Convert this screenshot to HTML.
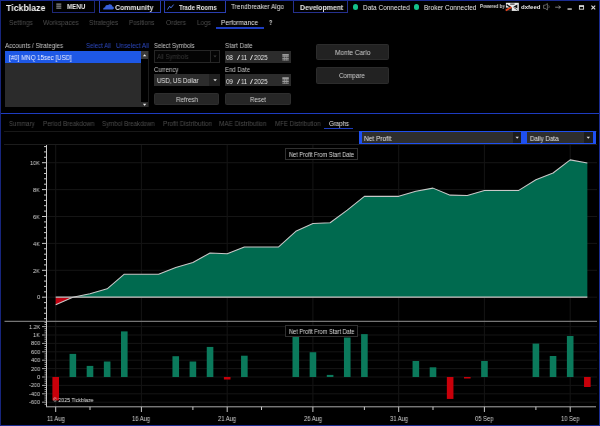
<!DOCTYPE html>
<html><head><meta charset="utf-8">
<style>
*{margin:0;padding:0;box-sizing:border-box}
html,body{width:600px;height:426px;overflow:hidden;background:#000}
body{position:relative;font-family:"Liberation Sans",sans-serif;color:#d8d8d8}
.t{position:absolute;white-space:nowrap;line-height:1;transform-origin:0 0;will-change:transform}
.b{font-weight:bold}
.x{position:absolute}
svg{position:absolute;left:0;top:0}
</style></head><body>
<!-- top bar boxes -->
<div class="x" style="left:52px;top:-1px;width:42.5px;height:14px;border:1px solid #1e2878"></div>
<div class="x" style="left:98.5px;top:-1px;width:62px;height:14px;border:1px solid #2a3eb0"></div>
<div class="x" style="left:164px;top:-1px;width:61.5px;height:13.5px;border:1px solid #2a3eb0"></div>
<div class="x" style="left:293px;top:-1px;width:54.5px;height:14px;border:1px solid #25308e"></div>
<div class="x" style="left:352.6px;top:4.3px;width:5.6px;height:5.6px;border-radius:50%;background:#14c08a"></div>
<div class="x" style="left:413.7px;top:4.3px;width:5.6px;height:5.6px;border-radius:50%;background:#14c08a"></div>
<div class="x" style="left:216px;top:27.1px;width:48px;height:1.6px;background:#1c3cc0"></div>

<!-- settings panel -->
<div class="x" style="left:5px;top:51px;width:136px;height:55.5px;background:#2b2b2b"></div>
<div class="x" style="left:5.2px;top:51px;width:135.8px;height:12.3px;background:#1e58e6"></div>
<div class="x" style="left:141px;top:51px;width:8px;height:55.5px;background:#000;border-right:1px solid #1c1c1c"></div>
<div class="x" style="left:141.3px;top:50.8px;width:7px;height:8px;background:#3a3a3a"></div>
<div class="x" style="left:141.3px;top:101.5px;width:7px;height:5px;background:#2c2c2c"></div>

<div class="x" style="left:154px;top:50.3px;width:66px;height:12.7px;border:1px solid #262626;background:#040404"></div>
<div class="x" style="left:209.5px;top:51px;width:1px;height:11px;background:#262626"></div>
<div class="x" style="left:154px;top:74px;width:66px;height:12px;background:#2c2c2c"></div>
<div class="x" style="left:209.3px;top:74px;width:10.7px;height:12px;background:#202020"></div>
<div class="x" style="left:153.8px;top:93px;width:65.7px;height:11.8px;background:#262626;border:1px solid #2e2e2e;border-radius:1.5px"></div>

<div class="x" style="left:225px;top:51px;width:65.7px;height:11.7px;background:#2c2c2c"></div>
<div class="x" style="left:225px;top:74.3px;width:65.7px;height:12px;background:#2c2c2c"></div>
<div class="x" style="left:225px;top:93px;width:66.2px;height:11.8px;background:#262626;border:1px solid #2e2e2e;border-radius:1.5px"></div>

<div class="x" style="left:316.4px;top:43.5px;width:72.2px;height:16.3px;background:#222;border:1px solid #2c2c2c;border-radius:1.5px"></div>
<div class="x" style="left:316.4px;top:66.9px;width:72.2px;height:16.7px;background:#222;border:1px solid #2c2c2c;border-radius:1.5px"></div>

<!-- blue separator -->
<div class="x" style="left:1px;top:112.6px;width:598px;height:1.6px;background:#1e3cc0"></div>

<!-- tabs -->
<div class="x" style="left:324px;top:127.8px;width:28.7px;height:1.5px;background:#1c3cc0"></div>
<div class="x" style="left:4px;top:130.5px;width:593px;height:1px;background:#181818"></div>

<!-- dropdowns -->
<div class="x" style="left:358.8px;top:130.8px;width:164.5px;height:13.5px;background:#2e2e2e;border:1.6px solid #1f50f0;border-left-width:3.2px;border-right-width:2px"></div>
<div class="x" style="left:513px;top:132.4px;width:8.3px;height:10.3px;background:#1c1c1c"></div>
<div class="x" style="left:523.3px;top:130.8px;width:73px;height:13.5px;background:#2e2e2e;border:1.6px solid #1f50f0;border-left-width:4.2px;border-right-width:3.5px"></div>
<div class="x" style="left:584px;top:132.4px;width:8.8px;height:10.3px;background:#1c1c1c"></div>

<!-- chart -->
<svg width="600" height="426">
<line x1="47" y1="297.2" x2="597" y2="297.2" stroke="#151515" stroke-width="1"/>
<line x1="47" y1="270.3" x2="597" y2="270.3" stroke="#151515" stroke-width="1"/>
<line x1="47" y1="243.4" x2="597" y2="243.4" stroke="#151515" stroke-width="1"/>
<line x1="47" y1="216.5" x2="597" y2="216.5" stroke="#151515" stroke-width="1"/>
<line x1="47" y1="189.6" x2="597" y2="189.6" stroke="#151515" stroke-width="1"/>
<line x1="47" y1="162.7" x2="597" y2="162.7" stroke="#151515" stroke-width="1"/>
<line x1="4" y1="144.5" x2="597" y2="144.5" stroke="#1c1c1c" stroke-width="1"/>
<line x1="55.7" y1="145" x2="55.7" y2="406" stroke="#151515" stroke-width="1"/>
<line x1="141.4" y1="145" x2="141.4" y2="406" stroke="#151515" stroke-width="1"/>
<line x1="227.2" y1="145" x2="227.2" y2="406" stroke="#151515" stroke-width="1"/>
<line x1="312.9" y1="145" x2="312.9" y2="406" stroke="#151515" stroke-width="1"/>
<line x1="398.7" y1="145" x2="398.7" y2="406" stroke="#151515" stroke-width="1"/>
<line x1="484.4" y1="145" x2="484.4" y2="406" stroke="#151515" stroke-width="1"/>
<line x1="570.2" y1="145" x2="570.2" y2="406" stroke="#151515" stroke-width="1"/>
<line x1="47" y1="402.2" x2="597" y2="402.2" stroke="#151515" stroke-width="1"/>
<line x1="47" y1="393.8" x2="597" y2="393.8" stroke="#151515" stroke-width="1"/>
<line x1="47" y1="385.4" x2="597" y2="385.4" stroke="#151515" stroke-width="1"/>
<line x1="47" y1="377.0" x2="597" y2="377.0" stroke="#151515" stroke-width="1"/>
<line x1="47" y1="368.6" x2="597" y2="368.6" stroke="#151515" stroke-width="1"/>
<line x1="47" y1="360.2" x2="597" y2="360.2" stroke="#151515" stroke-width="1"/>
<line x1="47" y1="351.8" x2="597" y2="351.8" stroke="#151515" stroke-width="1"/>
<line x1="47" y1="343.4" x2="597" y2="343.4" stroke="#151515" stroke-width="1"/>
<line x1="47" y1="335.0" x2="597" y2="335.0" stroke="#151515" stroke-width="1"/>
<line x1="47" y1="326.6" x2="597" y2="326.6" stroke="#151515" stroke-width="1"/>
<defs><clipPath id="cpos"><rect x="0" y="0" width="600" height="297.20"/></clipPath><clipPath id="cneg"><rect x="0" y="297.20" width="600" height="100"/></clipPath></defs>
<path d="M55.70,297.2 L55.70,304.69 L72.85,297.29 L90.00,293.74 L107.15,288.78 L124.30,274.17 L141.45,274.17 L158.60,274.17 L175.75,267.52 L192.90,262.55 L210.05,252.92 L227.20,253.73 L244.35,246.91 L261.50,246.91 L278.65,246.91 L295.80,231.34 L312.95,223.40 L330.10,222.73 L347.25,210.08 L364.40,196.35 L381.55,196.35 L398.70,196.35 L415.85,191.23 L433.00,188.12 L450.15,195.14 L467.30,195.54 L484.45,190.42 L501.60,190.42 L518.75,190.42 L535.90,179.73 L553.05,173.00 L570.20,159.88 L587.35,163.08 L587.35,297.2 Z" fill="#006a4f" clip-path="url(#cpos)"/>
<path d="M55.70,297.2 L55.70,304.69 L72.85,297.29 L90.00,293.74 L107.15,288.78 L124.30,274.17 L141.45,274.17 L158.60,274.17 L175.75,267.52 L192.90,262.55 L210.05,252.92 L227.20,253.73 L244.35,246.91 L261.50,246.91 L278.65,246.91 L295.80,231.34 L312.95,223.40 L330.10,222.73 L347.25,210.08 L364.40,196.35 L381.55,196.35 L398.70,196.35 L415.85,191.23 L433.00,188.12 L450.15,195.14 L467.30,195.54 L484.45,190.42 L501.60,190.42 L518.75,190.42 L535.90,179.73 L553.05,173.00 L570.20,159.88 L587.35,163.08 L587.35,297.2 Z" fill="#c00010" clip-path="url(#cneg)"/>
<polyline points="55.70,304.69 72.85,297.29 90.00,293.74 107.15,288.78 124.30,274.17 141.45,274.17 158.60,274.17 175.75,267.52 192.90,262.55 210.05,252.92 227.20,253.73 244.35,246.91 261.50,246.91 278.65,246.91 295.80,231.34 312.95,223.40 330.10,222.73 347.25,210.08 364.40,196.35 381.55,196.35 398.70,196.35 415.85,191.23 433.00,188.12 450.15,195.14 467.30,195.54 484.45,190.42 501.60,190.42 518.75,190.42 535.90,179.73 553.05,173.00 570.20,159.88 587.35,163.08" fill="none" stroke="#c8c8c8" stroke-width="1.05" stroke-linejoin="round"/>
<line x1="55.70" y1="297.2" x2="587.35" y2="297.2" stroke="#c8c8c8" stroke-width="1.2"/>
<rect x="52.40" y="377.00" width="6.6" height="23.39" fill="#c8000a"/>
<rect x="69.55" y="353.90" width="6.6" height="23.10" fill="#0b7a5c"/>
<rect x="86.70" y="365.91" width="6.6" height="11.09" fill="#0b7a5c"/>
<rect x="103.85" y="361.50" width="6.6" height="15.50" fill="#0b7a5c"/>
<rect x="121.00" y="331.39" width="6.6" height="45.61" fill="#0b7a5c"/>
<rect x="172.45" y="356.21" width="6.6" height="20.79" fill="#0b7a5c"/>
<rect x="189.60" y="361.50" width="6.6" height="15.50" fill="#0b7a5c"/>
<rect x="206.75" y="346.93" width="6.6" height="30.07" fill="#0b7a5c"/>
<rect x="223.90" y="377.00" width="6.6" height="2.52" fill="#c8000a"/>
<rect x="241.05" y="355.71" width="6.6" height="21.29" fill="#0b7a5c"/>
<rect x="292.50" y="328.36" width="6.6" height="48.64" fill="#0b7a5c"/>
<rect x="309.65" y="352.22" width="6.6" height="24.78" fill="#0b7a5c"/>
<rect x="326.80" y="374.90" width="6.6" height="2.10" fill="#0b7a5c"/>
<rect x="343.95" y="337.52" width="6.6" height="39.48" fill="#0b7a5c"/>
<rect x="361.10" y="334.12" width="6.6" height="42.88" fill="#0b7a5c"/>
<rect x="412.55" y="361.00" width="6.6" height="16.00" fill="#0b7a5c"/>
<rect x="429.70" y="367.30" width="6.6" height="9.70" fill="#0b7a5c"/>
<rect x="446.85" y="377.00" width="6.6" height="21.92" fill="#c8000a"/>
<rect x="464.00" y="377.00" width="6.6" height="1.50" fill="#c8000a"/>
<rect x="481.15" y="361.00" width="6.6" height="16.00" fill="#0b7a5c"/>
<rect x="532.60" y="343.61" width="6.6" height="33.39" fill="#0b7a5c"/>
<rect x="549.75" y="356.00" width="6.6" height="21.00" fill="#0b7a5c"/>
<rect x="566.90" y="336.01" width="6.6" height="40.99" fill="#0b7a5c"/>
<rect x="584.05" y="377.00" width="6.6" height="10.00" fill="#c8000a"/>
<line x1="4.5" y1="321.4" x2="597" y2="321.4" stroke="#757575" stroke-width="1.1"/>
<line x1="46.5" y1="145" x2="46.5" y2="407" stroke="#c8c8c8" stroke-width="1"/>
<line x1="46" y1="406.8" x2="596" y2="406.8" stroke="#aaaaaa" stroke-width="1"/>
<line x1="44" y1="318.7" x2="46.5" y2="318.7" stroke="#c8c8c8" stroke-width="1"/>
<line x1="44" y1="313.3" x2="46.5" y2="313.3" stroke="#c8c8c8" stroke-width="1"/>
<line x1="44" y1="308.0" x2="46.5" y2="308.0" stroke="#c8c8c8" stroke-width="1"/>
<line x1="44" y1="302.6" x2="46.5" y2="302.6" stroke="#c8c8c8" stroke-width="1"/>
<line x1="42" y1="297.2" x2="46.5" y2="297.2" stroke="#c8c8c8" stroke-width="1"/>
<line x1="44" y1="291.8" x2="46.5" y2="291.8" stroke="#c8c8c8" stroke-width="1"/>
<line x1="44" y1="286.4" x2="46.5" y2="286.4" stroke="#c8c8c8" stroke-width="1"/>
<line x1="44" y1="281.1" x2="46.5" y2="281.1" stroke="#c8c8c8" stroke-width="1"/>
<line x1="44" y1="275.7" x2="46.5" y2="275.7" stroke="#c8c8c8" stroke-width="1"/>
<line x1="42" y1="270.3" x2="46.5" y2="270.3" stroke="#c8c8c8" stroke-width="1"/>
<line x1="44" y1="264.9" x2="46.5" y2="264.9" stroke="#c8c8c8" stroke-width="1"/>
<line x1="44" y1="259.5" x2="46.5" y2="259.5" stroke="#c8c8c8" stroke-width="1"/>
<line x1="44" y1="254.2" x2="46.5" y2="254.2" stroke="#c8c8c8" stroke-width="1"/>
<line x1="44" y1="248.8" x2="46.5" y2="248.8" stroke="#c8c8c8" stroke-width="1"/>
<line x1="42" y1="243.4" x2="46.5" y2="243.4" stroke="#c8c8c8" stroke-width="1"/>
<line x1="44" y1="238.0" x2="46.5" y2="238.0" stroke="#c8c8c8" stroke-width="1"/>
<line x1="44" y1="232.6" x2="46.5" y2="232.6" stroke="#c8c8c8" stroke-width="1"/>
<line x1="44" y1="227.3" x2="46.5" y2="227.3" stroke="#c8c8c8" stroke-width="1"/>
<line x1="44" y1="221.9" x2="46.5" y2="221.9" stroke="#c8c8c8" stroke-width="1"/>
<line x1="42" y1="216.5" x2="46.5" y2="216.5" stroke="#c8c8c8" stroke-width="1"/>
<line x1="44" y1="211.1" x2="46.5" y2="211.1" stroke="#c8c8c8" stroke-width="1"/>
<line x1="44" y1="205.7" x2="46.5" y2="205.7" stroke="#c8c8c8" stroke-width="1"/>
<line x1="44" y1="200.4" x2="46.5" y2="200.4" stroke="#c8c8c8" stroke-width="1"/>
<line x1="44" y1="195.0" x2="46.5" y2="195.0" stroke="#c8c8c8" stroke-width="1"/>
<line x1="42" y1="189.6" x2="46.5" y2="189.6" stroke="#c8c8c8" stroke-width="1"/>
<line x1="44" y1="184.2" x2="46.5" y2="184.2" stroke="#c8c8c8" stroke-width="1"/>
<line x1="44" y1="178.8" x2="46.5" y2="178.8" stroke="#c8c8c8" stroke-width="1"/>
<line x1="44" y1="173.5" x2="46.5" y2="173.5" stroke="#c8c8c8" stroke-width="1"/>
<line x1="44" y1="168.1" x2="46.5" y2="168.1" stroke="#c8c8c8" stroke-width="1"/>
<line x1="42" y1="162.7" x2="46.5" y2="162.7" stroke="#c8c8c8" stroke-width="1"/>
<line x1="44" y1="157.3" x2="46.5" y2="157.3" stroke="#c8c8c8" stroke-width="1"/>
<line x1="44" y1="151.9" x2="46.5" y2="151.9" stroke="#c8c8c8" stroke-width="1"/>
<line x1="44" y1="146.6" x2="46.5" y2="146.6" stroke="#c8c8c8" stroke-width="1"/>
<line x1="44.5" y1="404.3" x2="46.5" y2="404.3" stroke="#c8c8c8" stroke-width="0.8"/>
<line x1="42" y1="402.2" x2="46.5" y2="402.2" stroke="#c8c8c8" stroke-width="0.8"/>
<line x1="44.5" y1="400.1" x2="46.5" y2="400.1" stroke="#c8c8c8" stroke-width="0.8"/>
<line x1="44.5" y1="398.0" x2="46.5" y2="398.0" stroke="#c8c8c8" stroke-width="0.8"/>
<line x1="44.5" y1="395.9" x2="46.5" y2="395.9" stroke="#c8c8c8" stroke-width="0.8"/>
<line x1="42" y1="393.8" x2="46.5" y2="393.8" stroke="#c8c8c8" stroke-width="0.8"/>
<line x1="44.5" y1="391.7" x2="46.5" y2="391.7" stroke="#c8c8c8" stroke-width="0.8"/>
<line x1="44.5" y1="389.6" x2="46.5" y2="389.6" stroke="#c8c8c8" stroke-width="0.8"/>
<line x1="44.5" y1="387.5" x2="46.5" y2="387.5" stroke="#c8c8c8" stroke-width="0.8"/>
<line x1="42" y1="385.4" x2="46.5" y2="385.4" stroke="#c8c8c8" stroke-width="0.8"/>
<line x1="44.5" y1="383.3" x2="46.5" y2="383.3" stroke="#c8c8c8" stroke-width="0.8"/>
<line x1="44.5" y1="381.2" x2="46.5" y2="381.2" stroke="#c8c8c8" stroke-width="0.8"/>
<line x1="44.5" y1="379.1" x2="46.5" y2="379.1" stroke="#c8c8c8" stroke-width="0.8"/>
<line x1="42" y1="377.0" x2="46.5" y2="377.0" stroke="#c8c8c8" stroke-width="0.8"/>
<line x1="44.5" y1="374.9" x2="46.5" y2="374.9" stroke="#c8c8c8" stroke-width="0.8"/>
<line x1="44.5" y1="372.8" x2="46.5" y2="372.8" stroke="#c8c8c8" stroke-width="0.8"/>
<line x1="44.5" y1="370.7" x2="46.5" y2="370.7" stroke="#c8c8c8" stroke-width="0.8"/>
<line x1="42" y1="368.6" x2="46.5" y2="368.6" stroke="#c8c8c8" stroke-width="0.8"/>
<line x1="44.5" y1="366.5" x2="46.5" y2="366.5" stroke="#c8c8c8" stroke-width="0.8"/>
<line x1="44.5" y1="364.4" x2="46.5" y2="364.4" stroke="#c8c8c8" stroke-width="0.8"/>
<line x1="44.5" y1="362.3" x2="46.5" y2="362.3" stroke="#c8c8c8" stroke-width="0.8"/>
<line x1="42" y1="360.2" x2="46.5" y2="360.2" stroke="#c8c8c8" stroke-width="0.8"/>
<line x1="44.5" y1="358.1" x2="46.5" y2="358.1" stroke="#c8c8c8" stroke-width="0.8"/>
<line x1="44.5" y1="356.0" x2="46.5" y2="356.0" stroke="#c8c8c8" stroke-width="0.8"/>
<line x1="44.5" y1="353.9" x2="46.5" y2="353.9" stroke="#c8c8c8" stroke-width="0.8"/>
<line x1="42" y1="351.8" x2="46.5" y2="351.8" stroke="#c8c8c8" stroke-width="0.8"/>
<line x1="44.5" y1="349.7" x2="46.5" y2="349.7" stroke="#c8c8c8" stroke-width="0.8"/>
<line x1="44.5" y1="347.6" x2="46.5" y2="347.6" stroke="#c8c8c8" stroke-width="0.8"/>
<line x1="44.5" y1="345.5" x2="46.5" y2="345.5" stroke="#c8c8c8" stroke-width="0.8"/>
<line x1="42" y1="343.4" x2="46.5" y2="343.4" stroke="#c8c8c8" stroke-width="0.8"/>
<line x1="44.5" y1="341.3" x2="46.5" y2="341.3" stroke="#c8c8c8" stroke-width="0.8"/>
<line x1="44.5" y1="339.2" x2="46.5" y2="339.2" stroke="#c8c8c8" stroke-width="0.8"/>
<line x1="44.5" y1="337.1" x2="46.5" y2="337.1" stroke="#c8c8c8" stroke-width="0.8"/>
<line x1="42" y1="335.0" x2="46.5" y2="335.0" stroke="#c8c8c8" stroke-width="0.8"/>
<line x1="44.5" y1="332.9" x2="46.5" y2="332.9" stroke="#c8c8c8" stroke-width="0.8"/>
<line x1="44.5" y1="330.8" x2="46.5" y2="330.8" stroke="#c8c8c8" stroke-width="0.8"/>
<line x1="44.5" y1="328.7" x2="46.5" y2="328.7" stroke="#c8c8c8" stroke-width="0.8"/>
<line x1="42" y1="326.6" x2="46.5" y2="326.6" stroke="#c8c8c8" stroke-width="0.8"/>
<line x1="44.5" y1="324.5" x2="46.5" y2="324.5" stroke="#c8c8c8" stroke-width="0.8"/>
<line x1="44.5" y1="322.4" x2="46.5" y2="322.4" stroke="#c8c8c8" stroke-width="0.8"/>
<line x1="55.7" y1="406.8" x2="55.7" y2="412" stroke="#c8c8c8" stroke-width="1"/>
<line x1="141.4" y1="406.8" x2="141.4" y2="412" stroke="#c8c8c8" stroke-width="1"/>
<line x1="227.2" y1="406.8" x2="227.2" y2="412" stroke="#c8c8c8" stroke-width="1"/>
<line x1="312.9" y1="406.8" x2="312.9" y2="412" stroke="#c8c8c8" stroke-width="1"/>
<line x1="398.7" y1="406.8" x2="398.7" y2="412" stroke="#c8c8c8" stroke-width="1"/>
<line x1="484.4" y1="406.8" x2="484.4" y2="412" stroke="#c8c8c8" stroke-width="1"/>
<line x1="570.2" y1="406.8" x2="570.2" y2="412" stroke="#c8c8c8" stroke-width="1"/>
<line x1="90.0" y1="406.8" x2="90.0" y2="410" stroke="#c8c8c8" stroke-width="1"/>
<line x1="192.9" y1="406.8" x2="192.9" y2="410" stroke="#c8c8c8" stroke-width="1"/>
<line x1="261.5" y1="406.8" x2="261.5" y2="410" stroke="#c8c8c8" stroke-width="1"/>
<line x1="364.4" y1="406.8" x2="364.4" y2="410" stroke="#c8c8c8" stroke-width="1"/>
<line x1="433.0" y1="406.8" x2="433.0" y2="410" stroke="#c8c8c8" stroke-width="1"/>
<line x1="535.9" y1="406.8" x2="535.9" y2="410" stroke="#c8c8c8" stroke-width="1"/>
</svg>
<div class="x" style="left:285.2px;top:147.5px;width:72.5px;height:12.7px;border:1px solid #303030;background:#000"></div>
<div class="x" style="left:285.2px;top:325.2px;width:72.5px;height:12px;border:1px solid #303030;background:#000"></div>

<!-- icons overlay -->
<svg width="600" height="150">
<g fill="#b0b0b0"><rect x="56.3" y="3.6" width="5" height="1"/><rect x="56.3" y="5.6" width="5" height="1"/><rect x="56.3" y="7.6" width="5" height="1"/></g>
<path d="M103.3,9.4 L112.6,9.4 C114.4,9.4 114.3,6.4 112.4,6.5 C112.1,4.2 109.1,3.6 108,5.2 C106.5,4.5 104.9,5.7 105.3,7.2 C103.4,7.3 102.8,9.2 103.3,9.4 Z" fill="#3860d8"/>
<path d="M167.5,9.6 L169.6,6.2 L170.9,7.9 L173.6,4.6" fill="none" stroke="#4a72e0" stroke-width="1"/>
<rect x="505.9" y="2.8" width="12.9" height="8.1" fill="#eaeaea"/>
<path d="M505.9,7.6 L511.8,7.6 L511.8,10.9 L505.9,10.9 Z" fill="#111"/>
<path d="M506.6,4.6 L510.6,7.4" stroke="#111" stroke-width="1.3"/>
<path d="M510.2,3.6 L514.6,3.6 L514.6,4.6 L510.2,4.6 Z" fill="#222"/>
<path d="M513.6,6.6 L517.4,4.6 L517.4,8.6 Z" fill="#111"/>
<path d="M513.4,7.2 L517.6,10.2" stroke="#333" stroke-width="0.8"/>
<path d="M505.8,10.4 L511.4,7.2" stroke="#e8401a" stroke-width="1.7"/>
<path d="M543.6,5.2 L545.2,5.2 L547.4,3.6 L547.4,10 L545.2,8.4 L543.6,8.4 Z" fill="none" stroke="#8c8c8c" stroke-width="0.7"/>
<path d="M548.7,5.4 Q549.7,6.8 548.7,8.2" fill="none" stroke="#8c8c8c" stroke-width="0.6"/>
<path d="M555.2,7.2 L560.5,7.2 M558.6,5.7 L560.6,7.2 L558.6,8.7" stroke="#9a9a9a" stroke-width="0.8" fill="none"/>
<rect x="567.5" y="8.4" width="4.3" height="1.3" fill="#dcdcdc"/>
<rect x="579.4" y="5.9" width="4.2" height="3.3" fill="none" stroke="#dcdcdc" stroke-width="0.9"/>
<rect x="579" y="5.4" width="5" height="1.5" fill="#dcdcdc"/>
<path d="M591.4,5.6 L595.2,9.4 M595.2,5.6 L591.4,9.4" stroke="#dcdcdc" stroke-width="1.1"/>
<path d="M142.9,56.2 L144.6,54.2 L146.3,56.2 Z" fill="#f0f0f0"/>
<path d="M142.9,103.8 L146.3,103.8 L144.6,105.8 Z" fill="#f0f0f0"/>
<path d="M213.4,55.6 L216.6,55.6 L215,57.4 Z" fill="#3a3a3a"/>
<path d="M213.3,79.2 L216.9,79.2 L215.1,81.2 Z" fill="#e0e0e0"/>
<g fill="#a8a8a8">
<rect x="282.3" y="54.1" width="6.5" height="1.6"/><rect x="282.3" y="56.3" width="6.5" height="0.9"/><rect x="282.3" y="57.9" width="6.5" height="0.9"/><rect x="282.3" y="59.5" width="6.5" height="0.9"/>
<rect x="282.3" y="77.3" width="6.5" height="1.6"/><rect x="282.3" y="79.5" width="6.5" height="0.9"/><rect x="282.3" y="81.1" width="6.5" height="0.9"/><rect x="282.3" y="82.7" width="6.5" height="0.9"/>
</g>
<g fill="#9a9a9a"><rect x="284" y="55.7" width="0.6" height="4.7"/><rect x="286.5" y="55.7" width="0.6" height="4.7"/><rect x="284" y="78.9" width="0.6" height="4.7"/><rect x="286.5" y="78.9" width="0.6" height="4.7"/></g>
<path d="M515.5,136.8 L518.9,136.8 L517.2,138.8 Z" fill="#e0e0e0"/>
<path d="M586.6,136.8 L590,136.8 L588.3,138.8 Z" fill="#e0e0e0"/>
</svg>
<!-- window border -->
<div class="x" style="left:0;top:0;width:600px;height:426px;border:1px solid #1b2c90;border-left-color:#17257c"></div>
<div class="t b" id="t0" style="left:6.41px;top:2.83px;font-size:9.66px;color:#f2f2f2;transform:scaleX(0.910)">Tickblaze</div>
<div class="t b" id="t1" style="left:67.08px;top:2.59px;font-size:7.27px;color:#e6e6e6;transform:scaleX(0.854)">MENU</div>
<div class="t b" id="t2" style="left:115.37px;top:4.13px;font-size:7.59px;color:#e6e6e6;transform:scaleX(0.918)">Community</div>
<div class="t b" id="t3" style="left:179.19px;top:4.86px;font-size:6.48px;color:#e6e6e6;transform:scaleX(0.917)">Trade Rooms</div>
<div class="t" id="t4" style="left:231.35px;top:4.03px;font-size:7.17px;color:#e6e6e6;transform:scaleX(0.904)">Trendbreaker Algo</div>
<div class="t b" id="t5" style="left:299.96px;top:4.63px;font-size:7.17px;color:#e6e6e6;transform:scaleX(0.960)">Development</div>
<div class="t" id="t6" style="left:362.82px;top:4.86px;font-size:6.48px;color:#e6e6e6;transform:scaleX(0.991)">Data Connected</div>
<div class="t" id="t7" style="left:423.56px;top:4.86px;font-size:6.48px;color:#e6e6e6;transform:scaleX(1.006)">Broker Connected</div>
<div class="t b" id="t8" style="left:480.12px;top:5.01px;font-size:4.83px;color:#d8d8d8;transform:scaleX(0.909)">Powered by</div>
<div class="t b" id="t9" style="left:520.86px;top:3.96px;font-size:6.07px;color:#e6e6e6;transform:scaleX(0.988)">dxfeed</div>
<div class="t" id="t10" style="left:8.70px;top:20.33px;font-size:6.76px;color:#4c4c4c;transform:scaleX(0.976)">Settings</div>
<div class="t" id="t11" style="left:42.97px;top:20.33px;font-size:6.76px;color:#4c4c4c;transform:scaleX(0.960)">Workspaces</div>
<div class="t" id="t12" style="left:88.71px;top:20.33px;font-size:6.76px;color:#4c4c4c;transform:scaleX(0.960)">Strategies</div>
<div class="t" id="t13" style="left:129.08px;top:20.33px;font-size:6.76px;color:#4c4c4c;transform:scaleX(0.928)">Positions</div>
<div class="t" id="t14" style="left:165.69px;top:20.33px;font-size:6.76px;color:#4c4c4c;transform:scaleX(0.966)">Orders</div>
<div class="t" id="t15" style="left:196.83px;top:20.02px;font-size:7.13px;color:#4c4c4c;transform:scaleX(0.890)">Logs</div>
<div class="t" id="t16" style="left:221.17px;top:19.89px;font-size:6.71px;color:#e6e6e6;transform:scaleX(0.963)">Performance</div>
<div class="t b" id="t17" style="left:268.75px;top:19.69px;font-size:6.95px;color:#e6e6e6;transform:scaleX(0.793)">?</div>
<div class="t" id="t18" style="left:5.08px;top:42.53px;font-size:6.76px;color:#c4c4c4;transform:scaleX(0.909)">Accounts / Strategies</div>
<div class="t" id="t19" style="left:86.43px;top:42.53px;font-size:6.76px;color:#2c48c0;transform:scaleX(0.895)">Select All</div>
<div class="t" id="t20" style="left:116.21px;top:42.53px;font-size:6.76px;color:#2c48c0;transform:scaleX(0.932)">Unselect All</div>
<div class="t" id="t21" style="left:154.44px;top:42.53px;font-size:6.76px;color:#c4c4c4;transform:scaleX(0.869)">Select Symbols</div>
<div class="t" id="t22" style="left:225.02px;top:42.82px;font-size:6.59px;color:#c4c4c4;transform:scaleX(0.931)">Start Date</div>
<div class="t" id="t23" style="left:9.22px;top:54.53px;font-size:6.76px;color:#f0f0ff;transform:scaleX(0.915)">[#0] MNQ 15sec [USD]</div>
<div class="t" id="t24" style="left:157.23px;top:53.58px;font-size:6.76px;color:#383838;transform:scaleX(0.893)">All Symbols</div>
<div class="t" id="t25" style="left:226.32px;top:53.95px;font-size:7.03px;color:#e6e6e6;transform:scaleX(0.857)">08</div>
<div class="t" id="t26" style="left:236.80px;top:55.13px;font-size:6.76px;color:#e6e6e6;transform:scaleX(1.600)">/</div>
<div class="t" id="t27" style="left:241.07px;top:54.82px;font-size:7.13px;color:#e6e6e6;transform:scaleX(0.805)">11</div>
<div class="t" id="t28" style="left:249.70px;top:55.13px;font-size:6.76px;color:#e6e6e6;transform:scaleX(1.546)">/</div>
<div class="t" id="t29" style="left:254.25px;top:53.95px;font-size:7.03px;color:#e6e6e6;transform:scaleX(0.874)">2025</div>
<div class="t" id="t30" style="left:154.00px;top:66.99px;font-size:6.45px;color:#c4c4c4;transform:scaleX(0.929)">Currency</div>
<div class="t" id="t31" style="left:224.80px;top:66.70px;font-size:6.62px;color:#c4c4c4;transform:scaleX(0.908)">End Date</div>
<div class="t" id="t32" style="left:156.84px;top:77.50px;font-size:6.62px;color:#e6e6e6;transform:scaleX(0.904)">USD, US Dollar</div>
<div class="t" id="t33" style="left:226.32px;top:77.65px;font-size:7.03px;color:#e6e6e6;transform:scaleX(0.859)">09</div>
<div class="t" id="t34" style="left:236.80px;top:78.53px;font-size:6.76px;color:#e6e6e6;transform:scaleX(1.600)">/</div>
<div class="t" id="t35" style="left:241.07px;top:78.87px;font-size:7.13px;color:#e6e6e6;transform:scaleX(0.805)">11</div>
<div class="t" id="t36" style="left:249.70px;top:78.53px;font-size:6.76px;color:#e6e6e6;transform:scaleX(1.546)">/</div>
<div class="t" id="t37" style="left:254.25px;top:77.65px;font-size:7.03px;color:#e6e6e6;transform:scaleX(0.874)">2025</div>
<div class="t" id="t38" style="left:175.73px;top:96.66px;font-size:6.90px;color:#d0d0d0;transform:scaleX(0.918)">Refresh</div>
<div class="t" id="t39" style="left:250.02px;top:95.59px;font-size:7.27px;color:#d0d0d0;transform:scaleX(0.845)">Reset</div>
<div class="t" id="t40" style="left:334.72px;top:49.96px;font-size:6.90px;color:#d0d0d0;transform:scaleX(0.945)">Monte Carlo</div>
<div class="t" id="t41" style="left:339.39px;top:72.25px;font-size:7.03px;color:#d0d0d0;transform:scaleX(0.896)">Compare</div>
<div class="t" id="t42" style="left:9.13px;top:121.47px;font-size:6.88px;color:#4c4c4c;transform:scaleX(0.869)">Summary</div>
<div class="t" id="t43" style="left:43.28px;top:120.50px;font-size:6.62px;color:#4c4c4c;transform:scaleX(0.952)">Period Breakdown</div>
<div class="t" id="t44" style="left:102.22px;top:120.50px;font-size:6.62px;color:#4c4c4c;transform:scaleX(0.923)">Symbol Breakdown</div>
<div class="t" id="t45" style="left:162.72px;top:120.50px;font-size:6.62px;color:#4c4c4c;transform:scaleX(0.971)">Profit Distribution</div>
<div class="t" id="t46" style="left:219.37px;top:120.50px;font-size:6.62px;color:#4c4c4c;transform:scaleX(0.964)">MAE Distribution</div>
<div class="t" id="t47" style="left:274.79px;top:120.50px;font-size:6.62px;color:#4c4c4c;transform:scaleX(0.930)">MFE Distribution</div>
<div class="t" id="t48" style="left:328.89px;top:120.50px;font-size:6.62px;color:#e6e6e6;transform:scaleX(0.922)">Graphs</div>
<div class="t" id="t49" style="left:364.46px;top:135.96px;font-size:6.90px;color:#e6e6e6;transform:scaleX(0.949)">Net Profit</div>
<div class="t" id="t50" style="left:530.29px;top:135.96px;font-size:6.90px;color:#e6e6e6;transform:scaleX(0.893)">Daily Data</div>
<div class="t" id="t51" style="left:288.83px;top:151.58px;font-size:6.70px;color:#dcdcdc;transform:scaleX(0.842)">Net Profit From Start Date</div>
<div class="t" id="t52" style="left:288.83px;top:329.18px;font-size:6.70px;color:#dcdcdc;transform:scaleX(0.847)">Net Profit From Start Date</div>
<div class="t" id="t53" style="left:53.22px;top:397.33px;font-size:6.22px;color:#e0e0e0;transform:scaleX(0.849)">© 2025 Tickblaze</div>
<div class="t" id="t54" style="left:36.94px;top:294.00px;font-size:6.02px;color:#d4d4d4;transform:scaleX(0.919)">0</div>
<div class="t" id="t55" style="left:33.10px;top:267.60px;font-size:6.02px;color:#d4d4d4;transform:scaleX(0.919)">2K</div>
<div class="t" id="t56" style="left:33.10px;top:240.63px;font-size:6.11px;color:#d4d4d4;transform:scaleX(0.906)">4K</div>
<div class="t" id="t57" style="left:33.10px;top:213.80px;font-size:6.02px;color:#d4d4d4;transform:scaleX(0.919)">6K</div>
<div class="t" id="t58" style="left:33.10px;top:186.90px;font-size:6.02px;color:#d4d4d4;transform:scaleX(0.919)">8K</div>
<div class="t" id="t59" style="left:30.02px;top:160.00px;font-size:6.02px;color:#d4d4d4;transform:scaleX(0.919)">10K</div>
<div class="t" id="t60" style="left:29.07px;top:323.60px;font-size:6.02px;color:#d4d4d4;transform:scaleX(0.919)">1.2K</div>
<div class="t" id="t61" style="left:33.10px;top:331.93px;font-size:6.11px;color:#d4d4d4;transform:scaleX(0.906)">1K</div>
<div class="t" id="t62" style="left:30.78px;top:340.40px;font-size:6.02px;color:#d4d4d4;transform:scaleX(0.919)">800</div>
<div class="t" id="t63" style="left:30.78px;top:348.80px;font-size:6.02px;color:#d4d4d4;transform:scaleX(0.919)">600</div>
<div class="t" id="t64" style="left:30.78px;top:357.20px;font-size:6.02px;color:#d4d4d4;transform:scaleX(0.919)">400</div>
<div class="t" id="t65" style="left:30.78px;top:365.60px;font-size:6.02px;color:#d4d4d4;transform:scaleX(0.919)">200</div>
<div class="t" id="t66" style="left:36.94px;top:374.00px;font-size:6.02px;color:#d4d4d4;transform:scaleX(0.919)">0</div>
<div class="t" id="t67" style="left:28.94px;top:382.40px;font-size:6.02px;color:#d4d4d4;transform:scaleX(0.919)">-200</div>
<div class="t" id="t68" style="left:28.94px;top:390.80px;font-size:6.02px;color:#d4d4d4;transform:scaleX(0.919)">-400</div>
<div class="t" id="t69" style="left:28.94px;top:399.20px;font-size:6.02px;color:#d4d4d4;transform:scaleX(0.919)">-600</div>
<div class="t" id="t70" style="left:46.71px;top:416.28px;font-size:6.40px;color:#d4d4d4;transform:scaleX(0.920)">11 Aug</div>
<div class="t" id="t71" style="left:132.38px;top:416.36px;font-size:6.31px;color:#d4d4d4;transform:scaleX(0.920)">16 Aug</div>
<div class="t" id="t72" style="left:218.20px;top:416.36px;font-size:6.31px;color:#d4d4d4;transform:scaleX(0.920)">21 Aug</div>
<div class="t" id="t73" style="left:303.95px;top:416.36px;font-size:6.31px;color:#d4d4d4;transform:scaleX(0.920)">26 Aug</div>
<div class="t" id="t74" style="left:389.74px;top:416.36px;font-size:6.31px;color:#d4d4d4;transform:scaleX(0.920)">31 Aug</div>
<div class="t" id="t75" style="left:475.27px;top:416.36px;font-size:6.31px;color:#d4d4d4;transform:scaleX(0.920)">05 Sep</div>
<div class="t" id="t76" style="left:560.91px;top:416.36px;font-size:6.31px;color:#d4d4d4;transform:scaleX(0.920)">10 Sep</div>
</body></html>
